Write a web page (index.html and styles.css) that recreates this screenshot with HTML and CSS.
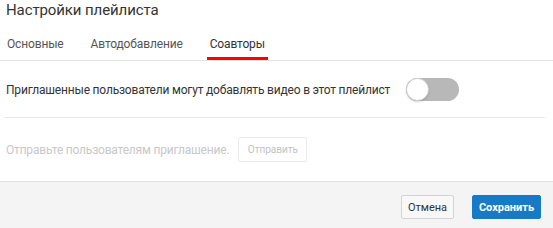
FILE: index.html
```html
<!DOCTYPE html>
<html lang="ru">
<head>
<meta charset="utf-8">
<title>Настройки плейлиста</title>
<link rel="stylesheet" href="styles.css">
</head>
<body>
<div class="dialog">
  <div class="title">Настройки плейлиста</div>
  <div class="tabs">
    <div class="tab">Основные</div>
    <div class="tab">Автодобавление</div>
    <div class="tab active">Соавторы</div>
  </div>
  <div class="content">
    <div class="toggle-row">
      <span class="label">Приглашенные пользователи могут добавлять видео в этот плейлист</span>
      <span class="toggle"><span class="knob"></span></span>
    </div>
    <div class="divider"></div>
    <div class="invite-row">
      <span class="invite-text">Отправьте пользователям приглашение.</span>
      <button class="btn-send" disabled>Отправить</button>
    </div>
  </div>
  <div class="footer">
    <button class="btn btn-cancel">Отмена</button>
    <button class="btn btn-save">Сохранить</button>
  </div>
</div>
</body>
</html>
```
FILE: styles.css
```css
html, body {
  margin: 0;
  padding: 0;
  background: #fff;
}
body {
  font-family: Roboto, "Liberation Sans", Arial, sans-serif;
  color: #333;
  width: 553px;
  height: 228px;
  overflow: hidden;
}
.dialog {
  display: flex;
  flex-direction: column;
  height: 228px;
}
.title {
  font-size: 15px;
  line-height: 18px;
  padding: 1px 0 0 6px;
  color: #333;
  letter-spacing: -0.1px;
}
.tabs {
  display: flex;
  gap: 21px;
  margin-top: 17px;
  padding-left: 4px;
  border-bottom: 1px solid #e4e4e4;
}
.tab {
  font-size: 12px;
  line-height: 16px;
  padding: 0 3px 5px;
  border-bottom: 3px solid transparent;
  color: #555;
  letter-spacing: -0.15px;
}
.tab.active {
  color: #333;
  border-bottom-color: #ff0000;
}
.content {
  padding: 17px 8px 0 5px;
  flex: 1;
}
.toggle-row {
  display: flex;
  align-items: center;
  height: 23px;
  padding-left: 1px;
}
.label {
  font-size: 12px;
  line-height: 16px;
  color: #333;
  letter-spacing: -0.19px;
}
.toggle {
  margin-left: 16px;
  width: 53px;
  height: 23px;
  border-radius: 12px;
  background: #b8b8b8;
  display: flex;
  align-items: center;
  box-sizing: border-box;
}
.knob {
  width: 23px;
  height: 23px;
  border-radius: 50%;
  background: #fff;
  box-sizing: border-box;
  border: 1px solid #cfcfcf;
  box-shadow: 0 1px 2px rgba(0, 0, 0, 0.15);
}
.divider {
  height: 1px;
  background: #e6e6e6;
  margin-top: 16px;
}
.invite-row {
  display: flex;
  align-items: center;
  margin-top: 19px;
  padding-left: 1px;
}
.invite-text {
  font-size: 12px;
  line-height: 16px;
  color: #c8c8c8;
  letter-spacing: -0.2px;
}
.btn-send {
  margin-left: 9px;
  width: 69px;
  height: 25px;
  border: 1px solid #ececec;
  border-radius: 2px;
  background: #fff;
  color: #c2c2c2;
  font-family: Roboto, "Liberation Sans", Arial, sans-serif;
  font-size: 10px;
  padding: 0;
}
.footer {
  background: #f4f4f4;
  border-top: 1px solid #e2e2e2;
  display: flex;
  justify-content: flex-end;
  align-items: flex-start;
  gap: 18px;
  padding: 13px 12px 0 0;
  box-sizing: border-box;
  height: 47px;
}
.btn {
  height: 24px;
  border-radius: 2px;
  font-family: Roboto, "Liberation Sans", Arial, sans-serif;
  font-size: 11px;
  padding: 0;
}
.btn-cancel {
  width: 53px;
  background: #f8f8f8;
  border: 1px solid #d3d3d3;
  color: #333;
}
.btn-save {
  width: 69px;
  background: #167ac6;
  border: 1px solid #167ac6;
  color: #fff;
  font-weight: bold;
}
```
